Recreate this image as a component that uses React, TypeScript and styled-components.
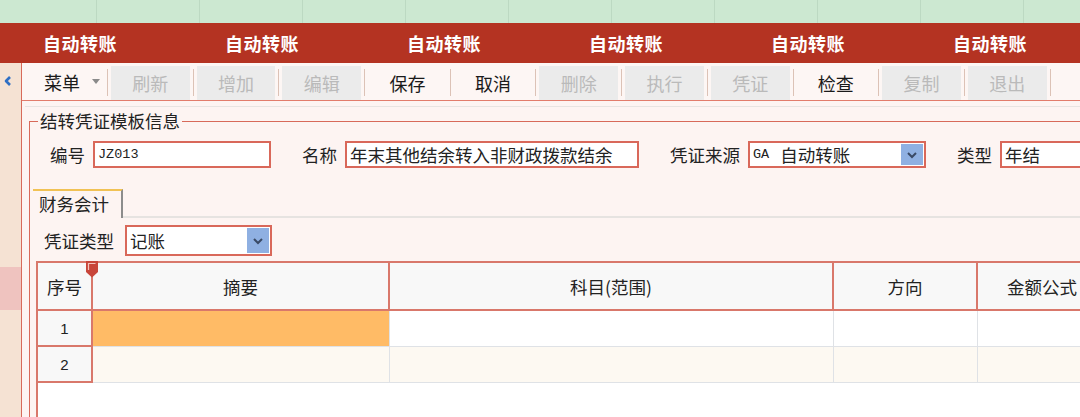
import React from 'react';
import styled, { createGlobalStyle } from 'styled-components';

const GlobalStyle = createGlobalStyle`
  html, body {
    margin: 0;
    padding: 0;
  }
  body {
    font-family: 'Noto Sans CJK SC', 'Liberation Sans', sans-serif;
    color: #222;
    background: #fdf4f2;
  }
`;

const titles = ['自动转账', '自动转账', '自动转账', '自动转账', '自动转账', '自动转账'];

const tools = [
  { label: '刷新', disabled: true },
  { label: '增加', disabled: true },
  { label: '编辑', disabled: true },
  { label: '保存', disabled: false },
  { label: '取消', disabled: false },
  { label: '删除', disabled: true },
  { label: '执行', disabled: true },
  { label: '凭证', disabled: true },
  { label: '检查', disabled: false },
  { label: '复制', disabled: true },
  { label: '退出', disabled: true },
];

const columns = [
  { title: '摘要', width: 297 },
  { title: '科目(范围)', width: 444 },
  { title: '方向', width: 144 },
  { title: '金额公式', width: 130 },
];

const Chevron = () => (
  <svg width="8" height="12" viewBox="0 0 8 12">
    <polyline points="6,2 2,6 6,10" fill="none" stroke="#2f6fc4" strokeWidth="2.6" strokeLinejoin="round" />
  </svg>
);

const DropArrow = () => (
  <svg width="12" height="8" viewBox="0 0 12 8">
    <polyline points="2,2 6,6 10,2" fill="none" stroke="#3a4a66" strokeWidth="2" />
  </svg>
);

const Marker = () => (
  <svg width="12" height="17" viewBox="0 0 12 17">
    <path d="M0 0 H12 V11 L6 16.5 L0 11 Z" fill="#c8463a" />
    <path d="M2.5 9 V2.5 H9.5" fill="none" stroke="#f4c4bc" strokeWidth="1.2" />
  </svg>
);

const App = () => {
  return (
    <>
      <GlobalStyle />
      <Page>
        <TopStrip />
        <TitleBar>
          {titles.map((t, i) => (
            <TitleTab key={i}>{t}</TitleTab>
          ))}
        </TitleBar>
        <Body>
          <SideBar>
            <ChevronBox>
              <Chevron />
            </ChevronBox>
            <SideHighlight />
          </SideBar>
          <Main>
            <Toolbar>
              <MenuButton>
                菜单
                <MenuArrow />
              </MenuButton>
              {tools.map((tool) => (
                <React.Fragment key={tool.label}>
                  <Separator />
                  <ToolButton disabled={tool.disabled}>{tool.label}</ToolButton>
                </React.Fragment>
              ))}
              <Separator />
            </Toolbar>
            <Content>
              <Panel>
                <GroupBox>
                  <Legend>结转凭证模板信息</Legend>
                  <FieldRow>
                    <Field>
                      <Label>编号</Label>
                      <TextBox width={178}>
                        <Mono>JZ013</Mono>
                      </TextBox>
                    </Field>
                    <Field>
                      <Label>名称</Label>
                      <TextBox width={294}>年末其他结余转入非财政拨款结余</TextBox>
                    </Field>
                    <Field>
                      <Label>凭证来源</Label>
                      <TextBox width={178}>
                        <Mono spaced>GA</Mono>自动转账
                        <DropButton>
                          <DropArrow />
                        </DropButton>
                      </TextBox>
                    </Field>
                    <Field>
                      <Label>类型</Label>
                      <TextBox width={220}>年结</TextBox>
                    </Field>
                  </FieldRow>
                  <TabStrip>
                    <Tab>财务会计</Tab>
                    <TabFiller />
                  </TabStrip>
                  <TypeRow>
                    <Label>凭证类型</Label>
                    <TextBox width={147} tall>
                      记账
                      <DropButton>
                        <DropArrow />
                      </DropButton>
                    </TextBox>
                  </TypeRow>
                  <GridFrame>
                    <Table>
                      <colgroup>
                        <col style={{ width: 55 }} />
                        {columns.map((c) => (
                          <col key={c.title} style={{ width: c.width }} />
                        ))}
                      </colgroup>
                      <thead>
                        <tr>
                          <HeadCell>
                            序号
                            <MarkerBox>
                              <Marker />
                            </MarkerBox>
                          </HeadCell>
                          {columns.map((c) => (
                            <HeadCell key={c.title}>{c.title}</HeadCell>
                          ))}
                        </tr>
                      </thead>
                      <tbody>
                        {[1, 2].map((n) => (
                          <tr key={n}>
                            <NumCell>{n}</NumCell>
                            {columns.map((c, i) => (
                              <DataCell key={c.title} alt={n === 2} active={n === 1 && i === 0} />
                            ))}
                          </tr>
                        ))}
                      </tbody>
                    </Table>
                  </GridFrame>
                </GroupBox>
              </Panel>
            </Content>
          </Main>
        </Body>
      </Page>
    </>
  );
};

export default App;

const Page = styled.div`
  width: 1080px;
  height: 417px;
  display: flex;
  flex-direction: column;
  overflow: hidden;
`;

const TopStrip = styled.div`
  height: 23px;
  flex: none;
  background-color: #cce8d1;
  background-image: repeating-linear-gradient(
    90deg,
    transparent 0,
    transparent 96px,
    #bcd9c2 96px,
    #bcd9c2 97px,
    transparent 97px,
    transparent 103px
  );
`;

const TitleBar = styled.div`
  height: 40px;
  flex: none;
  display: flex;
  align-items: center;
  padding-left: 43px;
  background: #b43322;
  overflow: hidden;
`;

const TitleTab = styled.div`
  flex: none;
  width: 182px;
  color: #fff;
  font-size: 18px;
  font-weight: 700;
  letter-spacing: 0.5px;
  line-height: 22px;
`;

const Body = styled.div`
  flex: 1;
  display: flex;
  min-height: 0;
`;

const SideBar = styled.div`
  width: 21px;
  flex: none;
  display: flex;
  flex-direction: column;
  background: #f5e2d3;
  border-right: 1px solid #d86a5a;
`;

const ChevronBox = styled.div`
  height: 12px;
  padding: 5px 0 0 4px;
`;

const SideHighlight = styled.div`
  margin-top: 187px;
  height: 43px;
  background: #efc3bf;
`;

const Main = styled.div`
  flex: 1;
  min-width: 0;
  display: flex;
  flex-direction: column;
`;

const Toolbar = styled.div`
  height: 37px;
  flex: none;
  display: flex;
  align-items: stretch;
  background: #fdf6f4;
  border-bottom: 1px solid #e27c6c;
`;

const MenuButton = styled.div`
  width: 63px;
  flex: none;
  display: flex;
  align-items: center;
  gap: 12px;
  padding-left: 22px;
  font-size: 18px;
  color: #1a1a1a;
`;

const MenuArrow = styled.span`
  width: 0;
  height: 0;
  border-left: 4px solid transparent;
  border-right: 4px solid transparent;
  border-top: 5px solid #8a8a8a;
`;

const Separator = styled.div`
  width: 1px;
  flex: none;
  margin: 6px 0 4px;
  background: #dcc2b6;
`;

const ToolButton = styled.div<{ disabled: boolean }>`
  width: 78.7px;
  flex: none;
  margin: 3px 3px 0;
  display: flex;
  align-items: center;
  justify-content: center;
  font-size: 18px;
  color: ${(p) => (p.disabled ? '#bababa' : '#1a1a1a')};
  background: ${(p) => (p.disabled ? '#ebebeb' : 'transparent')};
`;

const Content = styled.div`
  flex: 1;
  min-height: 0;
  display: flex;
  flex-direction: column;
  padding: 5px 0 0 3px;
`;

const Panel = styled.div`
  flex: 1;
  display: flex;
  flex-direction: column;
  border-top: 1px solid #e8e4e2;
  padding-left: 4px;
  background: #fdf4f2;
`;

const GroupBox = styled.fieldset`
  flex: 1;
  display: flex;
  flex-direction: column;
  margin: 4px 0 0;
  padding: 0;
  min-width: 0;
  border: none;
  border-top: 1px solid #d86a5a;
  border-left: 1px solid #d86a5a;
`;

const Legend = styled.legend`
  margin-left: 8px;
  padding: 0 2px;
  font-size: 17.5px;
  line-height: 20px;
  color: #222;
`;

const FieldRow = styled.div`
  display: flex;
  align-items: center;
  gap: 31px;
  margin-top: 10px;
  padding-left: 20px;
`;

const Field = styled.div`
  display: flex;
  align-items: center;
  gap: 8px;
  flex: none;
`;

const Label = styled.span`
  font-size: 17.5px;
  line-height: 20px;
  color: #222;
  white-space: nowrap;
`;

const TextBox = styled.div<{ width: number; tall?: boolean }>`
  position: relative;
  box-sizing: border-box;
  width: ${(p) => p.width}px;
  height: ${(p) => (p.tall ? 31 : 27)}px;
  display: flex;
  align-items: center;
  padding-left: 3px;
  border: 2px solid #d9685a;
  background: #fff;
  font-size: 17.5px;
  color: #222;
  white-space: nowrap;
  overflow: hidden;
`;

const Mono = styled.span<{ spaced?: boolean }>`
  font-family: 'Liberation Mono', 'DejaVu Sans Mono', monospace;
  font-size: 13.5px;
  margin-right: ${(p) => (p.spaced ? 11 : 0)}px;
`;

const DropButton = styled.span`
  position: absolute;
  top: 1px;
  right: 1px;
  bottom: 1px;
  width: 22px;
  display: flex;
  align-items: center;
  justify-content: center;
  background: #8fb0e2;
`;

const TabStrip = styled.div`
  display: flex;
  margin-top: 21px;
  padding-left: 3px;
`;

const Tab = styled.div`
  box-sizing: border-box;
  width: 90px;
  height: 29px;
  padding: 2px 0 0 6px;
  border-top: 2px solid #f1c255;
  border-right: 2px solid #8c8c8c;
  font-size: 17.5px;
  line-height: 22px;
  color: #222;
`;

const TabFiller = styled.div`
  flex: 1;
  border-bottom: 2px solid #e6e3e1;
`;

const TypeRow = styled.div`
  display: flex;
  align-items: center;
  gap: 11px;
  margin-top: 7px;
  padding-left: 14px;
`;

const GridFrame = styled.div`
  flex: 1;
  margin: 5px 0 0 6px;
  background: #fff;
  border-left: 2px solid #d9786b;
  overflow: hidden;
`;

const Table = styled.table`
  border-collapse: collapse;
  table-layout: fixed;
  width: 1070px;
  margin-left: -2px;
`;

const HeadCell = styled.th`
  position: relative;
  height: 46px;
  padding: 0;
  background: #f8f8f8;
  border: 2px solid #d9786b;
  font-size: 17.5px;
  font-weight: 400;
  color: #222;
  text-align: center;
  white-space: nowrap;
`;

const MarkerBox = styled.span`
  position: absolute;
  z-index: 2;
  top: -2px;
  right: -7px;
  display: flex;
`;

const NumCell = styled.td`
  height: 34px;
  padding: 0;
  background: #f8f8f8;
  border: 2px solid #d9786b;
  font-family: 'Liberation Sans', sans-serif;
  font-size: 15px;
  color: #222;
  text-align: center;
`;

const DataCell = styled.td<{ alt: boolean; active: boolean }>`
  padding: 0;
  border: 1px solid #dfe2e6;
  border-top: none;
  background: ${(p) => (p.active ? '#ffbb66' : p.alt ? '#fdf9f2' : '#fff')};
`;
